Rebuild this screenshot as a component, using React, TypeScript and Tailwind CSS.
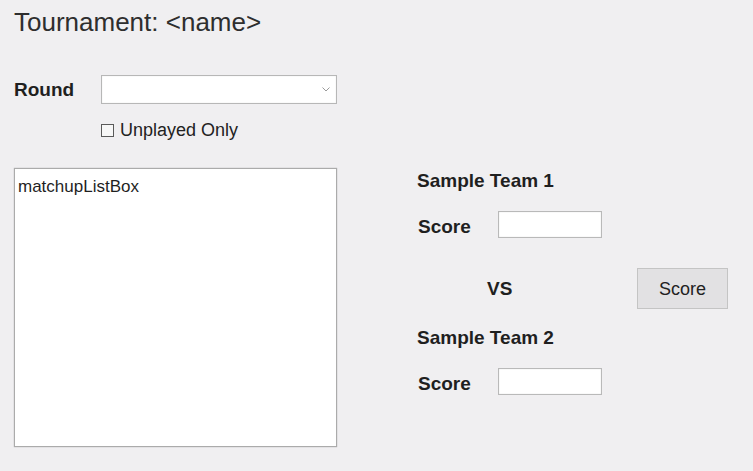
import React from "react";

const font = { fontFamily: '"Liberation Sans", Arial, sans-serif' };

function ScoreRow() {
  return (
    <div className="flex items-start">
      <span className="w-[81px] mt-[5.5px] pl-[1px] text-[19px] leading-none font-bold text-[#1f1f1f]">Score</span>
      <input
        type="text"
        className="w-[104px] h-[27px] bg-white border border-[#b9b9b9] shadow-[inset_0_0_1px_rgba(0,0,0,0.25)] outline-none"
      />
    </div>
  );
}

export default function App() {
  return (
    <div className="w-[753px] h-[471px] bg-[#f0eff1] overflow-hidden pt-[9px] pl-[14px] flex flex-col" style={font}>
      {/* Title */}
      <h1 className="text-[26px] leading-none font-normal text-[#2e2e2e]">Tournament: &lt;name&gt;</h1>

      {/* Round picker */}
      <div className="mt-[40px] flex items-center">
        <span className="w-[87px] text-[19px] leading-none font-bold text-[#1f1f1f]">Round</span>
        <div className="w-[236px] h-[29px] bg-white border border-[#b7b7b7] shadow-[inset_0_0_1px_rgba(0,0,0,0.2)] flex items-center justify-end pr-[6px]">
          <svg width="8" height="5" viewBox="0 0 8 5" fill="none">
            <path d="M0.5 0.5 L4 4 L7.5 0.5" stroke="#9a9a9a" strokeWidth="1" />
          </svg>
        </div>
      </div>

      {/* Unplayed only */}
      <div className="mt-[17px] ml-[87px] flex items-center gap-[6px]">
        <div className="w-[13px] h-[13px] border border-[#5a5a5a] bg-[#f7f7f7]" />
        <span className="text-[18px] leading-none text-[#222]">Unplayed Only</span>
      </div>

      {/* Main area */}
      <div className="mt-[29px] flex">
        <div className="w-[323px] h-[279px] bg-white border border-[#ababab] shadow-[0_0_1px_rgba(0,0,0,0.3)] pt-[6px] pl-[3px]">
          <span className="text-[17px] leading-none text-[#1f1f1f]">matchupListBox</span>
        </div>

        <div className="ml-[80px] flex flex-col">
          <span className="pt-[3px] text-[19px] leading-none font-bold text-[#1f1f1f]">Sample Team 1</span>
          <div className="mt-[21px]">
            <ScoreRow />
          </div>

          <div className="mt-[30px] flex items-center">
            <span className="w-[220px] pl-[70px] text-[19px] leading-none font-bold text-[#1f1f1f]">VS</span>
            <button className="w-[91px] h-[41px] bg-[#e2e1e3] border border-[#c4c4c4] text-[18px] leading-none text-[#222]">
              Score
            </button>
          </div>

          <span className="mt-[18.5px] text-[19px] leading-none font-bold text-[#1f1f1f]">Sample Team 2</span>
          <div className="mt-[21.5px]">
            <ScoreRow />
          </div>
        </div>
      </div>
    </div>
  );
}
